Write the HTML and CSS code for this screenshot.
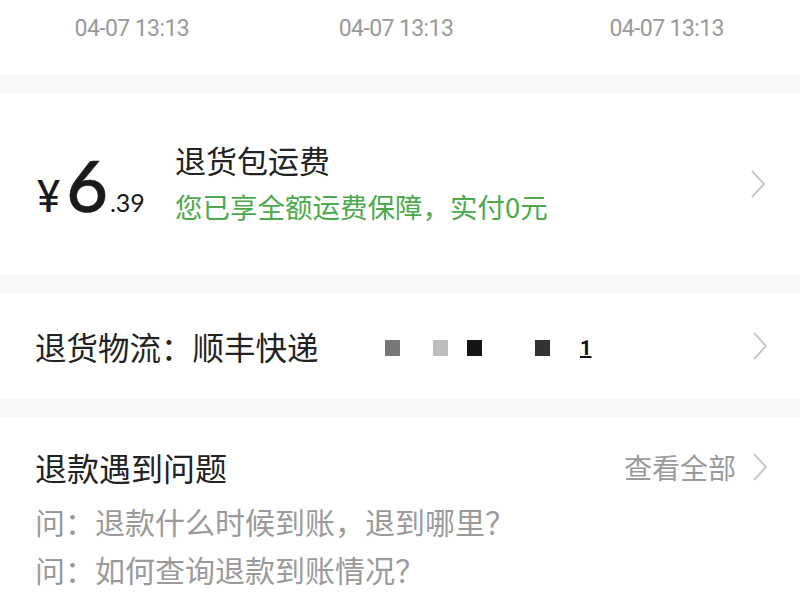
FILE: index.html
```html
<!DOCTYPE html>
<html lang="zh">
<head>
<meta charset="utf-8">
<link rel="stylesheet" href="styles.css">
</head>
<body>
<div class="page">
  <section class="card times">
    <div class="time">04-07 13:13</div>
    <div class="time">04-07 13:13</div>
    <div class="time">04-07 13:13</div>
  </section>

  <section class="card fee">
    <div class="price"><span class="yen">¥</span><span class="int">6</span><span class="dec">.39</span></div>
    <div class="fee-text">
      <div class="fee-title">退货包运费</div>
      <div class="fee-sub">您已享全额运费保障，实付0元</div>
    </div>
    <svg class="chev" width="16" height="30" viewBox="0 0 16 30"><path d="M2 2 L14 15 L2 28" fill="none" stroke="#c8c8c8" stroke-width="2"/></svg>
  </section>

  <section class="card logistics">
    <div class="log-label">退货物流：顺丰快递</div>
    <div class="mask">
      <span class="sq s1"></span>
      <span class="sq s2"></span>
      <span class="sq s3"></span>
      <span class="sq s4"></span>
      <span class="one">1</span>
    </div>
    <svg class="chev" width="16" height="30" viewBox="0 0 16 30"><path d="M2 2 L14 15 L2 28" fill="none" stroke="#c8c8c8" stroke-width="2"/></svg>
  </section>

  <section class="card faq">
    <div class="faq-head">
      <div class="faq-title">退款遇到问题</div>
      <div class="more">查看全部
        <svg class="chev" width="16" height="30" viewBox="0 0 16 30"><path d="M2 2 L14 15 L2 28" fill="none" stroke="#c8c8c8" stroke-width="2"/></svg>
      </div>
    </div>
    <div class="q">问：退款什么时候到账，退到哪里？</div>
    <div class="q">问：如何查询退款到账情况？</div>
  </section>
</div>
</body>
</html>
```

FILE: styles.css
```css
html, body {
  margin: 0;
  padding: 0;
  background: #f7f7f7;
}
body {
  font-family: "Noto Sans CJK SC", "Noto Sans", sans-serif;
  width: 800px;
  height: 600px;
  overflow: hidden;
}
.page {
  display: flex;
  flex-direction: column;
  gap: 18px;
}
.card {
  background: #fff;
}
.times {
  height: 75px;
  display: grid;
  grid-template-columns: repeat(3, 1fr);
  align-items: start;
}
.time {
  text-align: center;
  font-family: "Roboto", sans-serif;
  font-size: 23px;
  letter-spacing: -0.6px;
  color: #9a9a9a;
  line-height: 24px;
  padding-top: 17px;
}
.times .time:first-child { padding-right: 3px; }
.times .time:nth-child(2) { padding-right: 8px; }

.fee {
  height: 182px;
  display: flex;
  align-items: center;
  padding: 0 34px 0 37px;
  box-sizing: border-box;
}
.price {
  width: 138px;
  display: flex;
  align-items: baseline;
  font-family: "Lato", "Roboto", sans-serif;
  color: #1a1a1a;
  margin-top: 4px;
}
.yen {
  font-family: "Roboto", sans-serif;
  font-size: 44px;
  margin-right: 6px;
}
.int {
  font-size: 72px;
  line-height: 70px;
  font-weight: 500;
  -webkit-text-stroke: 0.6px #1a1a1a;
}
.dec {
  font-size: 25px;
  margin-left: 2px;
}
.fee-text {
  flex: 1;
  display: flex;
  flex-direction: column;
  gap: 4px;
  margin-top: -4px;
}
.fee-title {
  font-size: 31px;
  line-height: 44px;
  color: #222;
}
.fee-sub {
  font-size: 27.5px;
  line-height: 40px;
  color: #4caa4c;
}
.chev {
  display: block;
  flex: none;
}

.logistics {
  height: 106px;
  display: flex;
  align-items: center;
  padding: 0 32px 0 35px;
  box-sizing: border-box;
}
.log-label {
  font-size: 31.5px;
  color: #222;
  line-height: 44px;
  width: 350px;
}
.mask {
  flex: 1;
  display: flex;
  align-items: center;
  height: 20px;
  margin-top: 4px;
}
.sq {
  display: block;
  width: 15px;
  height: 16px;
}
.s1 { background: #787878; margin-left: 0; }
.s2 { background: #bdbdbd; margin-left: 33px; }
.s3 { background: #151515; margin-left: 19px; }
.s4 { background: #333; margin-left: 53px; }
.one {
  margin-left: 30px;
  font-family: "Roboto", sans-serif;
  font-size: 20px;
  line-height: 20px;
  font-weight: 700;
  color: #111;
  text-decoration: underline;
}

.faq {
  height: 200px;
  padding: 28px 32px 0 35px;
  box-sizing: border-box;
}
.faq-head {
  display: flex;
  justify-content: space-between;
  align-items: center;
  height: 44px;
  margin-bottom: 8px;
}
.faq-title {
  font-size: 32px;
  color: #222;
  line-height: 44px;
}
.more {
  display: flex;
  align-items: center;
  gap: 16px;
  font-size: 28px;
  color: #9a9a9a;
}
.q {
  font-size: 30px;
  line-height: 48px;
  color: #9a9a9a;
}
```
